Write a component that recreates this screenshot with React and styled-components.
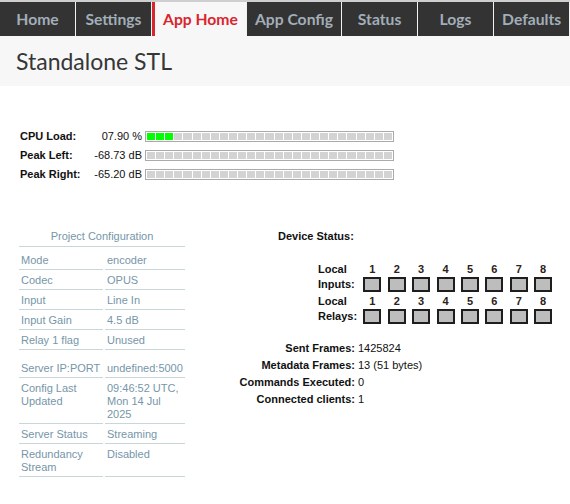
import React from 'react';
import styled, { createGlobalStyle } from 'styled-components';

const GlobalStyle = createGlobalStyle`
    body {
        margin: 0;
        background: #fff;
        font-family: "Liberation Sans", Arial, sans-serif;
    }
`

const Nav = styled.nav`
    display: flex;
    height: 34px;
    border-top: 2px solid #cfcfcf;
    background: #333;
    overflow: hidden;
    white-space: nowrap;
`

const Tab = styled.div`
    display: flex;
    align-items: center;
    justify-content: center;
    min-width: 59px;
    padding: 0 8px;
    border-right: 1px solid #f2f2f2;
    border-left: ${props => (props.active ? "3px solid #d8262e" : "none")};
    background: ${props => (props.active ? "#f7f7f7" : "#333")};
    color: ${props => (props.active ? "#d8262e" : "#a2aeb8")};
    font-family: Lato, "Open Sans", sans-serif;
    font-weight: 700;
    font-size: 15.7px;
    flex-shrink: 0;
`

const Header = styled.header`
    display: flex;
    align-items: center;
    height: 50px;
    padding-left: 16px;
    background: #f7f7f7;

    h1 {
        margin: 0;
        font-family: Lato, "Open Sans", sans-serif;
        font-weight: 400;
        font-size: 23px;
        color: #363636;
    }
`

const Meters = styled.div`
    display: grid;
    grid-template-columns: 69px 50px 249px;
    grid-auto-rows: 11px;
    row-gap: 8px;
    column-gap: 3px;
    align-items: center;
    margin: 45px 0 0 20px;
    font-size: 11px;
    line-height: 11px;
    color: #111;

    .label {
        font-weight: bold;
    }
    .value {
        text-align: right;
    }
`

const Bar = styled.div`
    display: grid;
    grid-template-columns: repeat(27, 1fr);
    column-gap: 1px;
    height: 11px;
    box-sizing: border-box;
    padding: 1px;
    border: 1px solid #aaa;
    background: #fff;
`

const Segment = styled.div`
    background: ${props => (props.lit ? "#00ff00" : "#d3d3d3")};
`

const Lower = styled.div`
    display: flex;
    align-items: flex-start;
    gap: 45px;
    margin: 48px 0 0 17px;
    font-size: 11px;
    line-height: 13px;
`

const Config = styled.div`
    width: 170px;
    color: #7696a9;

    .title {
        margin: 0 2px 3px;
        padding: 2px 0 3px;
        text-align: center;
        border-bottom: 1px solid #c8d8d8;
    }
`

const ConfigTable = styled.table`
    width: 170px;
    table-layout: fixed;
    border-collapse: separate;
    border-spacing: 2px;
    margin-top: ${props => props.gap || 0}px;

    td {
        padding: 2px 0 2px 2px;
        border-bottom: 1px solid #c8d8d8;
        vertical-align: top;
        font-size: 11px;
        line-height: 13px;
        color: #7696a9;
    }
    .key {
        width: 82px;
    }
`

const Status = styled.div`
    flex: 1;
    color: #111;

    .heading {
        padding: 2px 0 0 46px;
        font-weight: bold;
    }
`

const IOGrid = styled.div`
    display: grid;
    grid-template-columns: 39px repeat(8, 18px);
    grid-template-rows: 15px 17px 15px 17px;
    column-gap: 6.4px;
    margin: 19px 0 0 86px;
    font-weight: bold;
    font-size: 11px;

    .label {
        line-height: 15px;
    }
    .num {
        text-align: center;
        line-height: 15px;
        color: #2a2218;
    }
`

const Box = styled.div`
    width: 18px;
    height: 15px;
    box-sizing: border-box;
    border: 2px solid #1e1e1e;
    background: #bdbdbd;
`

const Stats = styled.div`
    display: grid;
    grid-template-columns: 123px auto;
    column-gap: 3px;
    margin-top: 14px;
    line-height: 17px;

    .label {
        text-align: right;
        font-weight: bold;
    }
`

const tabs = ["Home", "Settings", "App Home", "App Config", "Status", "Logs", "Defaults"]

const meters = [
    { label: "CPU Load:", value: "07.90 %", lit: 3 },
    { label: "Peak Left:", value: "-68.73 dB", lit: 0 },
    { label: "Peak Right:", value: "-65.20 dB", lit: 0 },
]

const configA = [
    ["Mode", "encoder"],
    ["Codec", "OPUS"],
    ["Input", "Line In"],
    ["Input Gain", "4.5 dB"],
    ["Relay 1 flag", "Unused"],
]

const configB = [
    ["Server IP:PORT", "undefined:5000"],
    ["Config Last Updated", "09:46:52 UTC, Mon 14 Jul 2025"],
    ["Server Status", "Streaming"],
    ["Redundancy Stream", "Disabled"],
]

const stats = [
    ["Sent Frames:", "1425824"],
    ["Metadata Frames:", "13 (51 bytes)"],
    ["Commands Executed:", "0"],
    ["Connected clients:", "1"],
]

const channels = [1, 2, 3, 4, 5, 6, 7, 8]

function IORows({ name }) {
    return (
        <>
            <div className="label">Local</div>
            {channels.map(n => <div className="num" key={"n" + n}>{n}</div>)}
            <div className="label">{name}:</div>
            {channels.map(n => <Box key={"b" + n} />)}
        </>
    )
}

export default function App() {
    return (
        <>
            <GlobalStyle />
            <Nav>
                {tabs.map(t => (
                    <Tab key={t} active={t === "App Home"}>{t}</Tab>
                ))}
            </Nav>
            <Header>
                <h1>Standalone STL</h1>
            </Header>
            <Meters>
                {meters.map(m => (
                    <React.Fragment key={m.label}>
                        <div className="label">{m.label}</div>
                        <div className="value">{m.value}</div>
                        <Bar>
                            {Array.from({ length: 27 }).map((_, i) => (
                                <Segment key={i} lit={i < m.lit} />
                            ))}
                        </Bar>
                    </React.Fragment>
                ))}
            </Meters>
            <Lower>
                <Config>
                    <div className="title">Project Configuration</div>
                    <ConfigTable>
                        <tbody>
                            {configA.map(([k, v]) => (
                                <tr key={k}><td className="key">{k}</td><td>{v}</td></tr>
                            ))}
                        </tbody>
                    </ConfigTable>
                    <ConfigTable gap={6}>
                        <tbody>
                            {configB.map(([k, v]) => (
                                <tr key={k}><td className="key">{k}</td><td>{v}</td></tr>
                            ))}
                        </tbody>
                    </ConfigTable>
                </Config>
                <Status>
                    <div className="heading">Device Status:</div>
                    <IOGrid>
                        <IORows name="Inputs" />
                        <IORows name="Relays" />
                    </IOGrid>
                    <Stats>
                        {stats.map(([k, v]) => (
                            <React.Fragment key={k}>
                                <div className="label">{k}</div>
                                <div>{v}</div>
                            </React.Fragment>
                        ))}
                    </Stats>
                </Status>
            </Lower>
        </>
    );
}
